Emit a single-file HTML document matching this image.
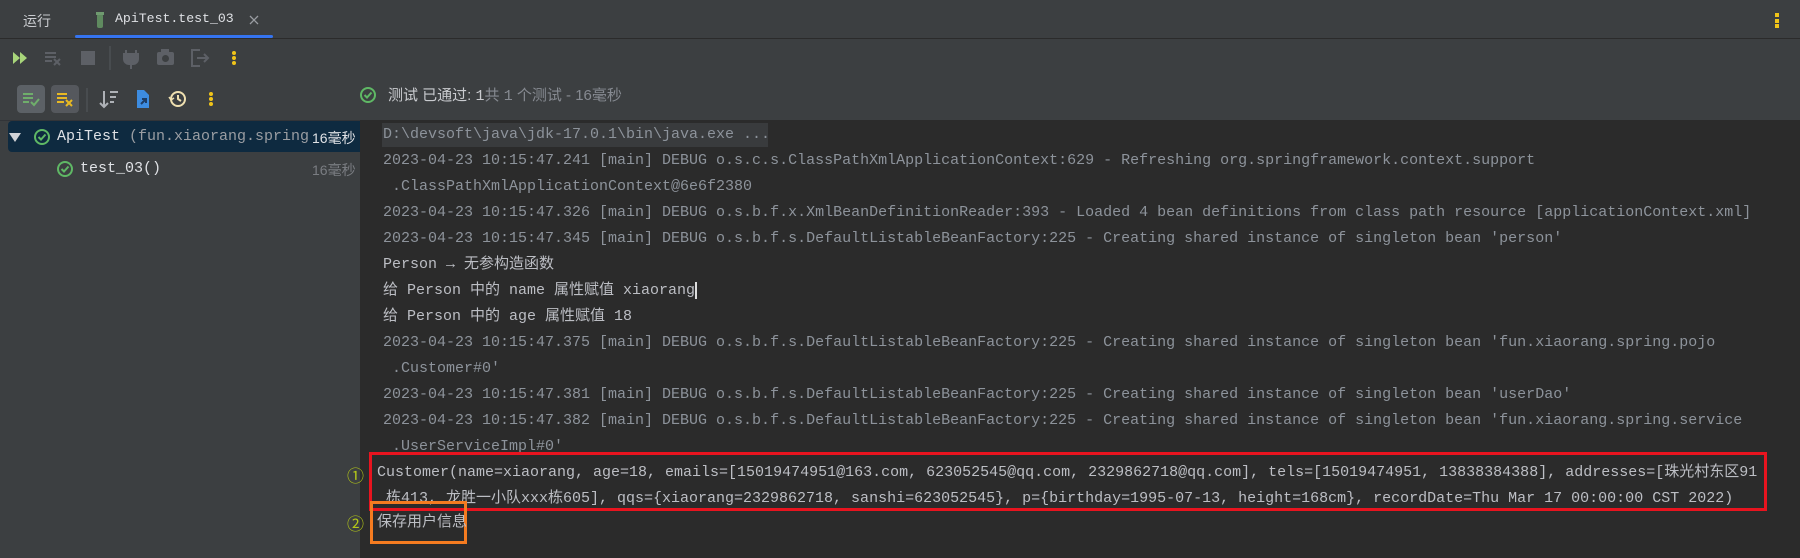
<!DOCTYPE html>
<html><head><meta charset="utf-8"><style>
*{margin:0;padding:0;box-sizing:border-box}
body{width:1800px;height:558px;background:#3c3f41;position:relative;overflow:hidden;font-family:"Liberation Mono","Noto Sans CJK SC",monospace;}
.a{position:absolute;white-space:pre}
.ln{position:absolute;left:383px;font-size:15px;line-height:20px;white-space:pre;color:#8d939b}
.b{color:#bcbec4}
.s{font-family:"Liberation Sans","Noto Sans CJK SC",sans-serif}
</style></head><body>
<!-- tab bar -->
<div class="a s" style="left:23px;top:11px;font-size:14px;color:#c9cbcf">运行</div>
<svg class="a" style="left:95px;top:11px" width="10" height="18"><rect x="2" y="3" width="6" height="14" rx="2" fill="#5f8a5f"/><rect x="1" y="1" width="8" height="3" fill="#6f9a6f"/></svg>
<div class="a" style="left:115px;top:11px;font-size:13.2px;color:#dfe1e5">ApiTest.test_03</div>
<svg class="a" style="left:249px;top:15px" width="10" height="10"><path d="M1 1l8 8M9 1l-8 8" stroke="#9a9da2" stroke-width="1.3"/></svg>
<div class="a" style="left:75px;top:35px;width:198px;height:3px;background:#3574f0;border-radius:2px"></div>
<div class="a" style="left:1775px;top:13px;width:4px;height:4px;background:#f0c419"></div>
<div class="a" style="left:1775px;top:19px;width:4px;height:4px;background:#f0c419"></div>
<div class="a" style="left:1775px;top:24px;width:4px;height:4px;background:#f0c419"></div>
<div class="a" style="left:0;top:38px;width:1800px;height:1px;background:#2b2b2b"></div>
<!-- toolbar 1 -->
<svg class="a" style="left:0;top:44px" width="260" height="30">
<polygon points="13,8 20,14 13,20" fill="#a8d57a"/><polygon points="20,8 27,14 20,20" fill="#a8d57a"/>
<g stroke="#5d6066" stroke-width="2"><line x1="45" y1="9" x2="56" y2="9"/><line x1="45" y1="13" x2="56" y2="13"/><line x1="45" y1="17" x2="52" y2="17"/><line x1="54" y1="15" x2="60" y2="21"/><line x1="60" y1="15" x2="54" y2="21"/></g>
<rect x="81" y="7" width="14" height="14" fill="#5d6066"/>
<line x1="110" y1="2" x2="110" y2="26" stroke="#55585d"/>
<path d="M126 6v4M136 6v4M124 10h14v5a5 5 0 0 1-5 5h-4a5 5 0 0 1-5-5z M131 20v5" fill="#5d6066" stroke="#5d6066" stroke-width="2"/>
<rect x="157" y="8" width="17" height="13" rx="2" fill="#5d6066"/><rect x="161" y="5" width="8" height="4" fill="#5d6066"/><circle cx="165.5" cy="14.5" r="3.5" fill="#3c3f41"/>
<path d="M200 6h-8v16h8M197 14h11M204 10l4 4-4 4" fill="none" stroke="#5d6066" stroke-width="2"/>
<circle cx="234" cy="9" r="2" fill="#f0c419"/><circle cx="234" cy="14" r="2" fill="#f0c419"/><circle cx="234" cy="19" r="2" fill="#f0c419"/>
</svg>
<!-- toolbar 2 -->
<div class="a" style="left:17px;top:85px;width:28px;height:28px;background:#5c6166;border-radius:4px"></div>
<div class="a" style="left:51px;top:85px;width:28px;height:28px;background:#55585d;border-radius:4px"></div>
<svg class="a" style="left:0;top:85px" width="260" height="30">
<g stroke="#6fae6b" stroke-width="2" fill="none"><line x1="23" y1="9" x2="33" y2="9"/><line x1="23" y1="13" x2="33" y2="13"/><line x1="23" y1="17" x2="29" y2="17"/><path d="M31 17l3 3 5-6"/></g>
<g stroke="#e8b923" stroke-width="2" fill="none"><line x1="57" y1="9" x2="67" y2="9"/><line x1="57" y1="13" x2="67" y2="13"/><line x1="57" y1="17" x2="64" y2="17"/><line x1="66" y1="15" x2="72" y2="21"/><line x1="72" y1="15" x2="66" y2="21"/></g>
<line x1="87" y1="3" x2="87" y2="27" stroke="#55585d"/>
<path d="M104 6v16M100 18l4 4 4-4M110 7h8M110 12h6M110 17h4" fill="none" stroke="#aeb1b6" stroke-width="2"/>
<path d="M137 5h7l5 5v13h-12z" fill="#3d8ce0"/><path d="M141 19l5-5M142 14h4v4" stroke="#1d3d66" stroke-width="2" fill="none"/>
<circle cx="178" cy="14" r="7" fill="none" stroke="#efe0b0" stroke-width="2"/><path d="M178 10v4l3 2" stroke="#efe0b0" stroke-width="2" fill="none"/><path d="M169 12l2 3 3-2" stroke="#efe0b0" stroke-width="1.5" fill="none"/>
<circle cx="211" cy="9" r="2" fill="#f0c419"/><circle cx="211" cy="14" r="2" fill="#f0c419"/><circle cx="211" cy="19" r="2" fill="#f0c419"/>
</svg>
<!-- status -->
<svg class="a" style="left:359px;top:86px" width="18" height="18"><circle cx="9" cy="9" r="7" fill="none" stroke="#5fb865" stroke-width="2"/><path d="M5.5 9l2.5 2.5 4.5-5" fill="none" stroke="#5fb865" stroke-width="2"/></svg>
<div class="a s" style="left:388px;top:84px;font-size:15px;color:#c9cbcf">测试 已通过: <span style="font-family:'Liberation Mono'">1</span><span style="color:#868a91">共 <span style="font-family:'Liberation Mono'">1</span> 个测试 - 16毫秒</span></div>
<!-- left tree -->
<div class="a" style="left:0;top:120px;width:360px;height:438px;background:#3c3f41;border-top:1px solid #323438"></div>
<div class="a" style="left:8px;top:121px;width:352px;height:31px;background:#0e2a40;border-radius:4px 0 0 4px"></div>
<svg class="a" style="left:9px;top:131px" width="12" height="12"><polygon points="0,2 12,2 6,11" fill="#d0d2d6"/></svg>
<svg class="a" style="left:33px;top:128px" width="18" height="18"><circle cx="9" cy="9" r="7" fill="none" stroke="#5fb865" stroke-width="2"/><path d="M5.5 9l2.5 2.5 4.5-5" fill="none" stroke="#5fb865" stroke-width="2"/></svg>
<div class="a" style="left:57px;top:128px;font-size:15px;color:#dfe1e5">ApiTest <span style="color:#9a9da2">(fun.xiaorang.spring</span></div>
<div class="a s" style="left:312px;top:128px;font-size:14px;color:#dfe1e5">16毫秒</div>
<svg class="a" style="left:56px;top:160px" width="18" height="18"><circle cx="9" cy="9" r="7" fill="none" stroke="#5fb865" stroke-width="2"/><path d="M5.5 9l2.5 2.5 4.5-5" fill="none" stroke="#5fb865" stroke-width="2"/></svg>
<div class="a" style="left:80px;top:160px;font-size:15px;color:#dfe1e5">test_03()</div>
<div class="a s" style="left:312px;top:160px;font-size:14px;color:#7a7d82">16毫秒</div>
<!-- console -->
<div class="a" style="left:360px;top:120px;width:1440px;height:438px;background:#2b2b2b"></div>
<div class="a" style="left:382px;top:123px;width:386px;height:24px;background:#393b3d"></div>
<div class="ln" style="top:125px">D:\devsoft\java\jdk-17.0.1\bin\java.exe ...</div>
<div class="ln" style="top:151px">2023-04-23 10:15:47.241 [main] DEBUG o.s.c.s.ClassPathXmlApplicationContext:629 - Refreshing org.springframework.context.support</div>
<div class="ln" style="top:177px"> .ClassPathXmlApplicationContext@6e6f2380</div>
<div class="ln" style="top:203px">2023-04-23 10:15:47.326 [main] DEBUG o.s.b.f.x.XmlBeanDefinitionReader:393 - Loaded 4 bean definitions from class path resource [applicationContext.xml]</div>
<div class="ln" style="top:229px">2023-04-23 10:15:47.345 [main] DEBUG o.s.b.f.s.DefaultListableBeanFactory:225 - Creating shared instance of singleton bean 'person'</div>
<div class="ln b" style="top:255px">Person → 无参构造函数</div>
<div class="ln b" style="top:281px">给 Person 中的 name 属性赋值 xiaorang<span style="border-left:2px solid #ddd"></span></div>
<div class="ln b" style="top:307px">给 Person 中的 age 属性赋值 18</div>
<div class="ln" style="top:333px">2023-04-23 10:15:47.375 [main] DEBUG o.s.b.f.s.DefaultListableBeanFactory:225 - Creating shared instance of singleton bean 'fun.xiaorang.spring.pojo</div>
<div class="ln" style="top:359px"> .Customer#0'</div>
<div class="ln" style="top:385px">2023-04-23 10:15:47.381 [main] DEBUG o.s.b.f.s.DefaultListableBeanFactory:225 - Creating shared instance of singleton bean 'userDao'</div>
<div class="ln" style="top:411px">2023-04-23 10:15:47.382 [main] DEBUG o.s.b.f.s.DefaultListableBeanFactory:225 - Creating shared instance of singleton bean 'fun.xiaorang.spring.service</div>
<div class="ln" style="top:437px;height:15px;overflow:hidden"> .UserServiceImpl#0'</div>
<div class="a" style="left:369px;top:452px;width:1398px;height:59px;border:3px solid #e8141f"></div>
<div class="ln b" style="left:377px;top:463px">Customer(name=xiaorang, age=18, emails=[15019474951@163.com, 623052545@qq.com, 2329862718@qq.com], tels=[15019474951, 13838384388], addresses=[珠光村东区91</div>
<div class="ln b" style="left:377px;top:489px"> 栋413, 龙胜一小队xxx栋605], qqs={xiaorang=2329862718, sanshi=623052545}, p={birthday=1995-07-13, height=168cm}, recordDate=Thu Mar 17 00:00:00 CST 2022)</div>
<div class="a" style="left:370px;top:501px;width:97px;height:43px;border:3px solid #f47b20"></div>
<div class="ln b" style="left:377px;top:513px">保存用户信息</div>
<div class="a s" style="left:347px;top:462px;font-size:17px;color:#b5c918">①</div>
<div class="a s" style="left:347px;top:510px;font-size:17px;color:#b5c918">②</div>
</body></html>
